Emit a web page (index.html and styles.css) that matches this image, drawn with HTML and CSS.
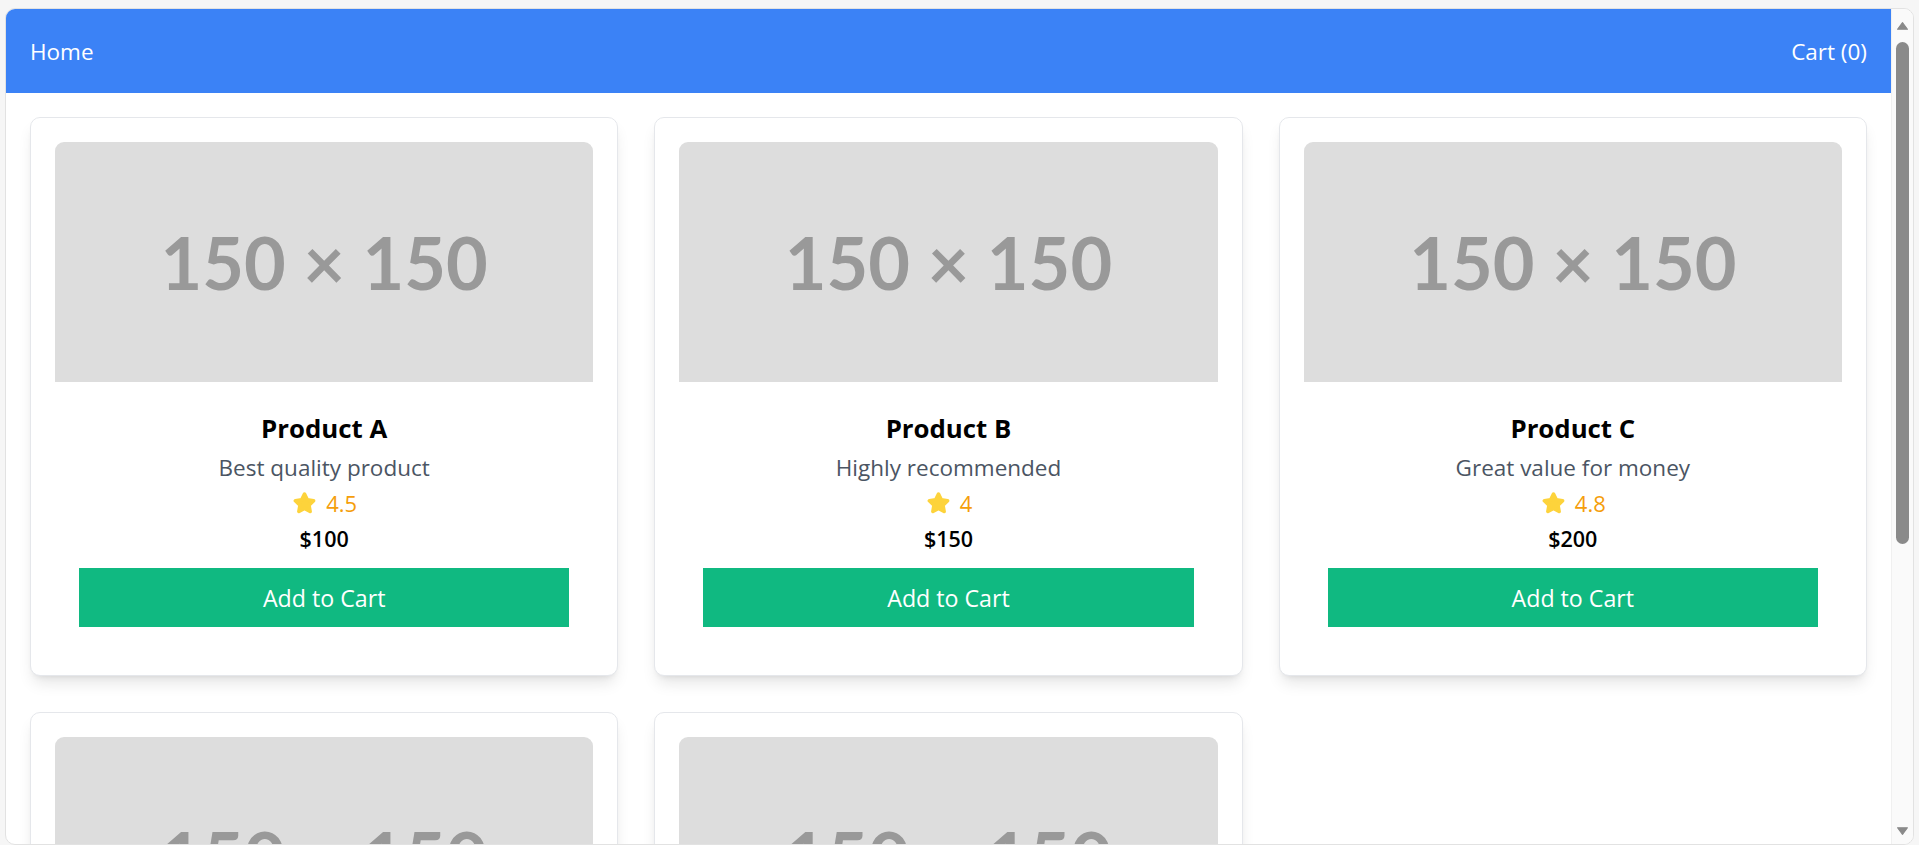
FILE: index.html
```html
<!DOCTYPE html>
<html lang="en">
<head>
<meta charset="utf-8">
<title>Shop</title>
<link rel="stylesheet" href="styles.css">
</head>
<body>
<div class="frame">
  <div class="page">
    <header class="topbar">
      <a class="nav-link">Home</a>
      <a class="nav-link">Cart (0)</a>
    </header>
    <main class="grid">
      <article class="card">
        <div class="thumb">150 × 150</div>
        <div class="info">
          <h2 class="title">Product A</h2>
          <p class="desc">Best quality product</p>
          <div class="rating"><svg class="star" viewBox="0 0 24 24"><path d="M12 3.6l2.5 5.2 5.6.8-4.1 3.9 1 5.6L12 16.4l-5 2.7 1-5.6-4.1-3.9 5.6-.8z"/></svg><span>4.5</span></div>
          <p class="price">$100</p>
          <button class="add">Add to Cart</button>
        </div>
      </article>
      <article class="card">
        <div class="thumb">150 × 150</div>
        <div class="info">
          <h2 class="title">Product B</h2>
          <p class="desc">Highly recommended</p>
          <div class="rating"><svg class="star" viewBox="0 0 24 24"><path d="M12 3.6l2.5 5.2 5.6.8-4.1 3.9 1 5.6L12 16.4l-5 2.7 1-5.6-4.1-3.9 5.6-.8z"/></svg><span>4</span></div>
          <p class="price">$150</p>
          <button class="add">Add to Cart</button>
        </div>
      </article>
      <article class="card">
        <div class="thumb">150 × 150</div>
        <div class="info">
          <h2 class="title">Product C</h2>
          <p class="desc">Great value for money</p>
          <div class="rating"><svg class="star" viewBox="0 0 24 24"><path d="M12 3.6l2.5 5.2 5.6.8-4.1 3.9 1 5.6L12 16.4l-5 2.7 1-5.6-4.1-3.9 5.6-.8z"/></svg><span>4.8</span></div>
          <p class="price">$200</p>
          <button class="add">Add to Cart</button>
        </div>
      </article>
      <article class="card">
        <div class="thumb">150 × 150</div>
        <div class="info">
          <h2 class="title">Product D</h2>
          <p class="desc">Customer favorite</p>
          <div class="rating"><svg class="star" viewBox="0 0 24 24"><path d="M12 3.6l2.5 5.2 5.6.8-4.1 3.9 1 5.6L12 16.4l-5 2.7 1-5.6-4.1-3.9 5.6-.8z"/></svg><span>4.2</span></div>
          <p class="price">$250</p>
          <button class="add">Add to Cart</button>
        </div>
      </article>
      <article class="card">
        <div class="thumb">150 × 150</div>
        <div class="info">
          <h2 class="title">Product E</h2>
          <p class="desc">Limited edition</p>
          <div class="rating"><svg class="star" viewBox="0 0 24 24"><path d="M12 3.6l2.5 5.2 5.6.8-4.1 3.9 1 5.6L12 16.4l-5 2.7 1-5.6-4.1-3.9 5.6-.8z"/></svg><span>4.6</span></div>
          <p class="price">$300</p>
          <button class="add">Add to Cart</button>
        </div>
      </article>
    </main>
  </div>
  <div class="scrollbar">
    <svg class="arrow" viewBox="0 0 10 7"><path d="M5 0.5L9.5 6.5H0.5z"/></svg>
    <div class="thumb-bar"></div>
    <div class="track-rest"></div>
    <svg class="arrow" viewBox="0 0 10 7"><path d="M0.5 0.5H9.5L5 6.5z"/></svg>
  </div>
</div>
</body>
</html>
```

FILE: styles.css
```css
* {
  box-sizing: border-box;
}

html, body {
  height: 100%;
}

body {
  margin: 0;
  padding: 8px 5px 0 5px;
  background: #f6f6f6;
  font-family: "Open Sans", "Noto Sans", Arial, sans-serif;
  overflow: hidden;
}

.frame {
  display: flex;
  height: calc(100vh - 8px);
  background: #ffffff;
  border: 1px solid #e2e2e2;
  border-radius: 10px;
  overflow: hidden;
}

.page {
  flex: 1;
  min-width: 0;
  overflow: hidden;
}

.topbar {
  display: flex;
  justify-content: space-between;
  align-items: center;
  height: 84px;
  padding: 0 24px;
  background: #3b82f6;
  color: #ffffff;
  font-size: 22.5px;
}

.nav-link {
  color: #ffffff;
  text-decoration: none;
}

.grid {
  display: grid;
  grid-template-columns: repeat(3, 1fr);
  gap: 36px;
  padding: 24px;
}

.card {
  background: #ffffff;
  border: 1px solid #e5e7eb;
  border-radius: 10px;
  padding: 24px;
  box-shadow: 0 10px 15px -3px rgba(0, 0, 0, 0.1), 0 4px 6px -4px rgba(0, 0, 0, 0.1);
}

.thumb {
  height: 240px;
  display: flex;
  align-items: center;
  justify-content: center;
  background: #dddddd;
  color: #999999;
  border-radius: 9px 9px 0 0;
  font-family: Lato, "Open Sans", sans-serif;
  font-weight: 700;
  font-size: 72px;
}

.info {
  padding: 24px;
  text-align: center;
}

.title {
  margin: 0;
  font-size: 25.8px;
  font-weight: 700;
  line-height: 42px;
  padding-top: 1px;
  padding-bottom: 1px;
  color: #000000;
}

.desc {
  margin: 0;
  font-size: 22.5px;
  line-height: 35px;
  color: #4b5563;
}

.rating {
  display: flex;
  justify-content: center;
  align-items: center;
  gap: 8px;
  height: 36px;
  font-size: 22px;
  color: #f59e0b;
}

.star {
  width: 27px;
  height: 27px;
  fill: #fdd33b;
  stroke: #fdd33b;
  stroke-width: 3.2;
  stroke-linejoin: round;
}

.price {
  margin: 0 0 12px;
  font-size: 21.5px;
  font-weight: 600;
  line-height: 35px;
  color: #000000;
}

.add {
  display: block;
  width: 100%;
  height: 59px;
  border: none;
  border-radius: 0;
  background: #10b981;
  color: #ffffff;
  font-family: "Open Sans", "Noto Sans", Arial, sans-serif;
  font-size: 23.2px;
}

.scrollbar {
  width: 22px;
  flex: none;
  display: flex;
  flex-direction: column;
  align-items: center;
  padding: 13px 0 9px;
  background: #fafafa;
  border-left: 1px solid #f0f0f0;
}

.arrow {
  width: 11px;
  height: 8px;
  fill: #8a8a8a;
  stroke: #8a8a8a;
  stroke-width: 1;
  stroke-linejoin: round;
}

.thumb-bar {
  margin-top: 12px;
  width: 13px;
  height: 502px;
  border-radius: 7px;
  background: #8a8a8a;
}

.track-rest {
  flex: 1;
}
```
